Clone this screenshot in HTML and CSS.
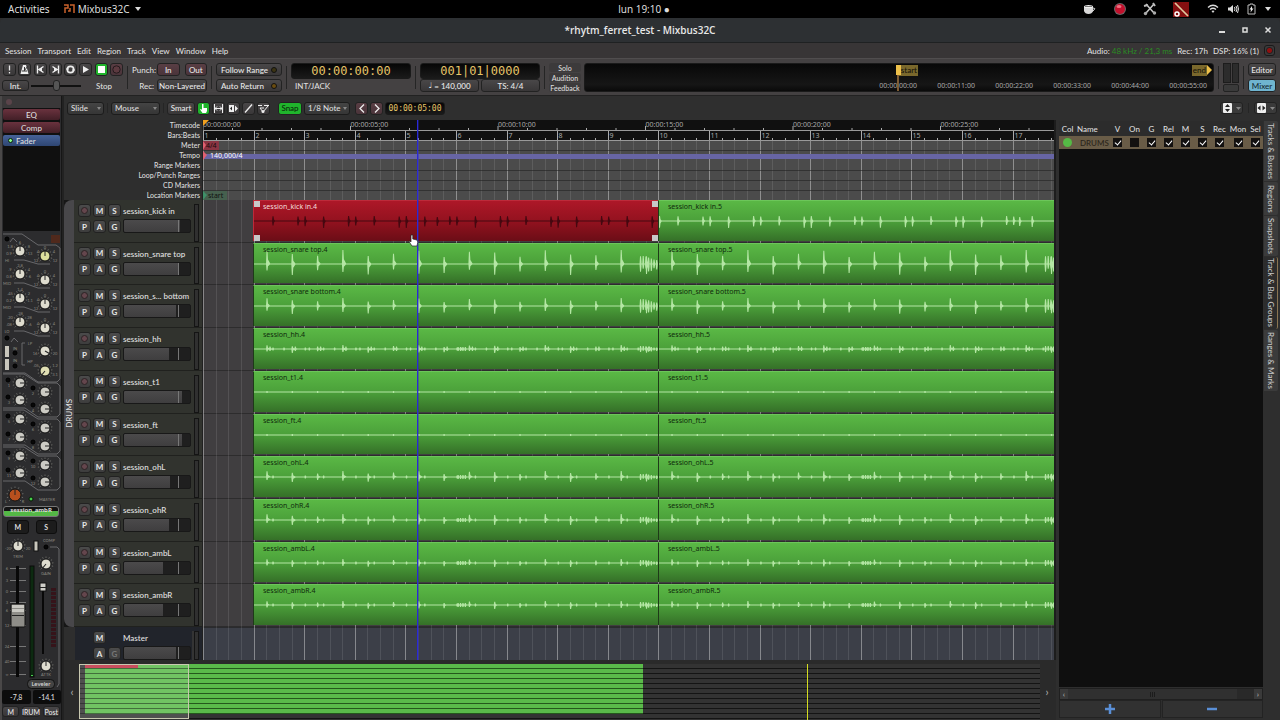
FILE: index.html
```html
<!DOCTYPE html>
<html lang="en">
<head>
<meta charset="utf-8">
<title>*rhytm_ferret_test - Mixbus32C</title>
<link rel="stylesheet" href="styles.css">
</head>
<body>
<header class="desktop-bar">
  <span class="activities">Activities</span>
  <svg class="app-icon" width="12" height="10" viewBox="0 0 12 10"><path d="M1 1h4v3H2v5M7 1h4v8M7 4v3H5" fill="none" stroke="#c9622c" stroke-width="1.5"/></svg>
  <span class="app-name">Mixbus32C</span><span class="caret"></span>
  <time class="desktop-clock">lun 19:10 ●</time>
  <div class="tray">
    <svg width="14" height="12" viewBox="0 0 14 12"><path d="M2 4h9v4q-1 3-4.500 3T2 8z" fill="#d8d8d8"/><ellipse cx="6.500" cy="3.500" rx="4.500" ry="1.600" fill="#f2f2f2"/><path d="M3 3.500h7" stroke="#777"/><path d="M11 5q3 0 1 2t-2 1" fill="none" stroke="#d8d8d8"/></svg>
    <svg width="14" height="14" viewBox="0 0 14 14"><circle cx="7" cy="7" r="6" fill="#6e6668"/><circle cx="7" cy="7" r="5" fill="#c2102c"/><ellipse cx="6" cy="4.500" rx="2.500" ry="1.500" fill="#ee7080"/></svg>
    <svg width="14" height="14" viewBox="0 0 14 14"><path d="M3 2l8 9M11 2L3 11" stroke="#c9c9c9" stroke-width="1.500"/><circle cx="2.500" cy="11.500" r="1.700" fill="#aaa"/><circle cx="11.500" cy="11" r="1.700" fill="#aaa"/><path d="M10 1l2 3M1 4l4-1" stroke="#bbb" stroke-width="2"/></svg>
    <svg width="16" height="15" viewBox="0 0 16 15"><rect width="16" height="15" fill="#850f10"/><path d="M2 1l13 13M3 2l6 6" stroke="#e0c9a0" stroke-width="1.700"/><circle cx="4" cy="12" r="2" fill="none" stroke="#fff" stroke-width="1.500"/></svg>
    <svg width="12" height="10" viewBox="0 0 12 10"><path d="M1 3.500q5-4.500 10 0M3 5.500q3-2.500 6 0" fill="none" stroke="#ddd" stroke-width="1.400"/><path d="M4.500 7q1.500-1 3 0L6 9z" fill="#ddd"/></svg>
    <svg width="12" height="10" viewBox="0 0 12 10"><path d="M1 3.500h2L6 1v8L3 6.500H1z" fill="#ddd"/><path d="M7.500 3q1 2 0 4M9 2q2 3 0 6M10.500 1q2 4 0 8" fill="none" stroke="#ddd"/></svg>
    <svg width="9" height="12" viewBox="0 0 9 12"><path d="M1 2h2V1h3v1h2v9H1z" fill="none" stroke="#bbb"/><path d="M5 3L2.500 6.500H4L3.500 9.500 6.500 5.500H5z" fill="#eee"/></svg>
    <span class="caret"></span>
  </div>
</header>

<div class="titlebar">
  <h1>*rhytm_ferret_test - Mixbus32C</h1>
  <div class="window-buttons">
    <button aria-label="Minimize"><svg width="8" height="8"><path d="M1 6h6" stroke="#ddd" stroke-width="2"/></svg></button>
    <button aria-label="Maximize"><svg width="8" height="8"><rect x="2" y="2" width="4" height="4" fill="none" stroke="#ddd" stroke-width="1.500"/></svg></button>
    <button aria-label="Close"><svg width="8" height="8"><path d="M1.500 1.500l5 5m0-5l-5 5" stroke="#ddd" stroke-width="1.500"/></svg></button>
  </div>
</div>

<nav class="menubar">
  <button>Session</button><button>Transport</button><button>Edit</button><button>Region</button><button>Track</button><button>View</button><button>Window</button><button>Help</button>
  <div class="status"><span>Audio: <b>48 kHz / 21,3 ms</b></span><span>Rec: 17h</span><span>DSP: 16% (1)</span><i class="error-led"></i></div>
</nav>

<section class="transport">
  <div class="stack controls">
    <div class="line">
      <button class="btn icon" aria-label="Panic"><svg width="11" height="11"><path d="M5.500 1.500v5M5.500 8v1.500" stroke="#e8e8e8" stroke-width="1.300"/></svg></button>
      <button class="btn icon" aria-label="Metronome"><svg width="11" height="11"><path d="M4 1h3l2.500 9h-8z" fill="#eee"/><path d="M5.500 3v3M3 7h5M5 7l4-5" stroke="#333"/></svg></button>
      <button class="btn icon" aria-label="Go to start"><svg width="11" height="11"><path d="M2.500 1.500v8M8.500 2.500L4 5.500l4.500 3" stroke="#eee" stroke-width="1.400" fill="none"/><path d="M3 5.500l4-2v4z" fill="#eee"/></svg></button>
      <button class="btn icon" aria-label="Go to end"><svg width="11" height="11"><path d="M8.500 1.500v8M2.500 2.500L7 5.500l-4.500 3" stroke="#eee" stroke-width="1.400" fill="none"/><path d="M8 5.500l-4-2v4z" fill="#eee"/></svg></button>
      <button class="btn icon" aria-label="Loop"><svg width="11" height="11"><circle cx="5.500" cy="5.500" r="3.200" fill="none" stroke="#eee" stroke-width="1.700"/><path d="M1 5h3M7 6h3" stroke="#eee"/></svg></button>
      <button class="btn icon" aria-label="Play"><svg width="11" height="11"><path d="M3 2l6 3.500L3 9z" fill="#eee"/></svg></button>
      <button class="btn icon green" aria-label="Stop"><svg width="11" height="11"><rect x="2" y="2" width="7" height="7" fill="#fff"/></svg></button>
      <button class="btn icon red" aria-label="Record"><svg width="11" height="11"><circle cx="5.500" cy="5.500" r="3.700" fill="#5c3a40" stroke="#241a1c"/></svg></button>
    </div>
    <div class="line"><button class="btn int">Int.</button><input class="shuttle" type="range" aria-label="Shuttle speed" value="50"><span class="stop-label">Stop</span></div>
  </div>
  <i class="sep"></i>
  <div class="stack punch">
    <div class="line"><span class="caption">Punch:</span><button class="btn red grow">In</button><button class="btn red grow gap">Out</button></div>
    <div class="line"><span class="caption">Rec:</span><button class="btn grow">Non-Layered</button></div>
  </div>
  <i class="sep"></i>
  <div class="stack follow">
    <button class="btn led">Follow Range<i></i></button>
    <button class="btn led">Auto Return<i class="amber"></i></button>
  </div>
  <i class="sep"></i>
  <div class="stack clock-col"><output class="clock">00:00:00:00</output><div class="line sync">INT/JACK</div></div>
  <i class="sep"></i>
  <div class="stack clock-col"><output class="clock">001|01|0000</output><div class="line"><button class="btn grow"><span class="note-glyph">♩</span>= 140,000</button><button class="btn grow">TS: 4/4</button></div></div>
  <i class="sep"></i>
  <div class="alerts"><button>Solo</button><button>Audition</button><button>Feedback</button></div>
  <div class="mini-timeline">
    <span class="mini-start">start</span><span class="mini-end">end</span>
    <div class="mini-labels"><span>00:00:00:00</span><span>00:00:11:00</span><span>00:00:22:00</span><span>00:00:33:00</span><span>00:00:44:00</span><span>00:00:55:00</span></div>
  </div>
  <i class="sep"></i>
  <div class="master-meter"><i></i><i></i><b></b></div>
  <i class="sep"></i>
  <div class="stack pages"><button class="btn">Editor</button><button class="btn active">Mixer</button></div>
</section>

<main class="workspace">
  <aside class="strip">
    <div class="strip-top"><i></i></div>
    <div class="processors"><button class="plugin">EQ</button><button class="plugin">Comp</button><button class="plugin fader-plugin"><i></i>Fader</button></div>
    <svg id="eq-panel" class="panel" width="62" height="273" viewBox="0 233 62 273"></svg>
    <button class="strip-name">session_ambR</button>
    <div class="strip-ms"><button>M</button><button>S</button></div>
    <svg id="fader-panel" class="panel" width="62" height="154" viewBox="0 536 62 154"></svg>
    <div class="levels"><output>-7,8</output><output>-14,1</output></div>
    <div class="strip-foot"><button class="btn">M</button><button class="btn">IRUM</button><button class="btn">Post</button></div>
  </aside>

  <div class="editor-page">
    <div class="toolbar">
      <label class="drop slide"><select aria-label="Edit mode"><option>Slide</option></select></label>
      <i class="sep"></i>
      <label class="drop mouse"><select aria-label="Edit point"><option>Mouse</option></select></label>
      <i class="sep"></i>
      <button class="btn smart">Smart</button>
      <div class="tools">
        <button class="btn icon green" aria-label="Grab"><svg width="11" height="11"><path d="M4 1h1.500v4H9v3L8 10H4.500L2 6.500l1-.5 1 1z" fill="#fff"/></svg></button>
        <button class="btn icon" aria-label="Range"><svg width="11" height="11"><path d="M1.500 1v9M9.500 1v9M2 5.500h7M4 3.500l-2 2 2 2M7 3.500l2 2-2 2" stroke="#eee" fill="none"/></svg></button>
        <button class="btn icon" aria-label="Stretch"><svg width="11" height="11"><path d="M1 2h5v7H1zM7 2.500L10 5.500 7 8.500z" fill="#eee"/><path d="M4 3.500v4L2 5.500z" fill="#222"/></svg></button>
        <button class="btn icon" aria-label="Draw"><svg width="11" height="11"><path d="M2 9.500L9 1.500" stroke="#eee" stroke-width="1.400"/></svg></button>
        <button class="btn icon" aria-label="Internal edit"><svg width="11" height="11"><path d="M0 2.500h4M6 2.500h5M2 5l3 4 5-6M2 5h4" stroke="#eee" fill="none"/><circle cx="5" cy="8.500" r="1.500" fill="#eee"/></svg></button>
      </div>
      <button class="btn green snap">Snap</button>
      <label class="drop note"><select aria-label="Grid"><option>1/8 Note</option></select></label>
      <button class="btn red icon nudge" aria-label="Nudge earlier"><svg width="10" height="11"><path d="M7 1.500l-4 4 4 4" fill="none" stroke="#eee" stroke-width="1.300"/></svg></button>
      <button class="btn red icon nudge" aria-label="Nudge later"><svg width="10" height="11"><path d="M3 1.500l4 4-4 4" fill="none" stroke="#eee" stroke-width="1.300"/></svg></button>
      <output class="clock small">00:00:05:00</output>
      <div class="zoomers">
        <button class="btn zoomer" aria-label="Track height"><svg width="20" height="10"><rect x="1" width="9" height="10" rx="1" fill="#eee"/><path d="M3 4l2.500-3L8 4zM3 6l2.500 3L8 6z" fill="#222"/><path d="M14 4h5l-2.500 3z" fill="#888"/></svg></button>
        <i class="sep"></i>
        <button class="btn zoomer" aria-label="Visible tracks"><svg width="20" height="10"><rect x="1" width="9" height="10" rx="1" fill="#eee"/><path d="M4.500 2.500l-3 2.500 3 2.500zM6.500 2.500l3 2.500-3 2.500z" fill="#222"/><path d="M14 4h5l-2.500 3z" fill="#888"/></svg></button>
      </div>
    </div>

    <div class="columns">
      <div class="editor">
        <div class="arrange">
          <div class="sidebar">
            <div class="ruler-names"><span>Timecode</span><span>Bars:Beats</span><span>Meter</span><span>Tempo</span><span>Range Markers</span><span>Loop/Punch Ranges</span><span>CD Markers</span><span>Location Markers</span></div>
            <div class="track-heads">
              <div class="group-tab"><span>DRUMS</span></div>
              <div id="heads" class="heads"></div>
            </div>
            <div class="master-head">
              <div class="head-buttons"><i></i><button class="btn">M</button><i></i><i></i><button class="btn">A</button><button class="btn dim">G</button></div>
              <div class="head-main"><span class="track-name">Master</span><input class="level" type="range" aria-label="Master level" style="--fill:52px"></div>
              <i class="meter"></i>
            </div>
          </div>
          <div class="canvas">
            <svg id="grid" class="grid"></svg>
            <svg id="rulers" class="rulers"></svg>
            <div id="lanes" class="lanes"></div>
            <div class="master-lane"></div>
            <i class="playhead"></i>
            <svg class="pointer" width="11" height="13" viewBox="0 0 11 13"><path d="M3 1h1.800v4L9 6l.8 2L9 12H4L1 7.500 2 7l1 1z" fill="#fff" stroke="#222" stroke-width=".7"/></svg>
          </div>
        </div>
        <div class="summary">
          <button aria-label="Scroll left">‹</button>
          <svg id="overview" class="overview"></svg>
          <button aria-label="Scroll right">›</button>
        </div>
      </div>

      <section class="groups">
        <div class="group-list">
          <table>
            <colgroup><col class="c-col"><col><col class="c-flag"><col class="c-flag"><col class="c-flag"><col class="c-flag"><col class="c-flag"><col class="c-flag"><col class="c-flag"><col class="c-mon"><col class="c-sel"></colgroup>
            <thead><tr><th>Col</th><th class="name">Name</th><th>V</th><th>On</th><th>G</th><th>Rel</th><th>M</th><th>S</th><th>Rec</th><th>Mon</th><th>Sel</th></tr></thead>
            <tbody><tr><td><i class="swatch"></i></td><td class="name">DRUMS</td>
              <td><input type="checkbox" aria-label="Visible" checked></td><td><input type="checkbox" aria-label="On"></td><td><input type="checkbox" aria-label="Gain" checked></td><td><input type="checkbox" aria-label="Relative" checked></td><td><input type="checkbox" aria-label="Mute" checked></td><td><input type="checkbox" aria-label="Solo" checked></td><td><input type="checkbox" aria-label="Record" checked></td><td><input type="checkbox" aria-label="Monitoring" checked></td><td><input type="checkbox" aria-label="Select" checked></td></tr></tbody>
          </table>
        </div>
        <div class="hscroll"><button aria-label="Scroll list left">‹</button><div class="thumb"><i></i><i></i><i></i></div><button aria-label="Scroll list right">›</button></div>
        <div class="group-actions">
          <button aria-label="Add group"><svg width="12" height="12"><path d="M6 1v10M1 6h10" stroke="#5a8fd6" stroke-width="2.500"/></svg></button>
          <button aria-label="Remove group"><svg width="12" height="12"><path d="M1 6h10" stroke="#5a8fd6" stroke-width="2.500"/></svg></button>
        </div>
      </section>

      <nav class="side-tabs"><button class="t1">Tracks &amp; Busses</button><button class="t2">Regions</button><button class="t3">Snapshots</button><button class="t4 current">Track &amp; Bus Groups</button><button class="t5">Ranges &amp; Marks</button></nav>
    </div>
  </div>
</main>
<script src="app.js"></script>
</body>
</html>
```
FILE: styles.css
```css
* { box-sizing: border-box; }
body { margin: 0; height: 100vh; display: flex; flex-direction: column; overflow: hidden; background: #2e2e2e; color: #dedede; font: 500 8px/10px Lato, "Open Sans", sans-serif; }
button, select, input { font: inherit; color: inherit; margin: 0; padding: 0; border: 0; background: none; }
button { display: flex; align-items: center; justify-content: center; white-space: nowrap; }
svg { display: block; flex: none; }
i { font-style: normal; }

.desktop-bar { position: relative; flex: none; height: 18px; background: #000; display: flex; align-items: center; padding: 0 8px; font: 10px/16px "Noto Sans", sans-serif; color: #ddd; }
.app-icon { margin: 0 3px 0 13px; }
.caret { width: 0; height: 0; border: 3px solid transparent; border-top: 4px solid #ddd; border-bottom: 0; margin-left: 5px; }
.desktop-clock { position: absolute; left: 0; right: 0; padding-left: 8px; text-align: center; }
.tray { margin-left: auto; display: flex; align-items: center; gap: 8px; }
.tray svg:nth-child(1) { margin-right: 9px; }
.tray svg:nth-child(2), .tray svg:nth-child(3) { margin-right: 8px; }
.tray svg:nth-child(4) { margin-right: 10px; }
.tray .caret { margin-left: 1px; margin-right: 1px; }

.titlebar { position: relative; flex: none; height: 24px; border-radius: 5px 5px 0 0; background: #2d3033; display: flex; align-items: center; justify-content: center; }
.titlebar h1 { margin: 0; font: 600 10px/12px "Open Sans", sans-serif; color: #e8e8e8; }
.window-buttons { position: absolute; right: 8px; display: flex; gap: 15px; }

.menubar { flex: none; height: 16px; display: flex; align-items: center; gap: 6px; padding: 0 5px; background: #383536; border-top: 1px solid #1f2122; }
.status { margin-left: auto; display: flex; align-items: center; gap: 5px; }
.status b { font-weight: 400; color: #2a8c24; }
.error-led { width: 11px; height: 11px; border: 1px solid #1a1a1a; border-radius: 3px; background: radial-gradient(circle, #901010 0 2px, #222 3px, #3c3a3b 4px); }

.transport { flex: none; height: 38px; display: flex; align-items: stretch; padding: 4px 4px 3px 2px; background: #444142; border-top: 1px solid #504d4e; border-bottom: 1px solid #222; }
.sep { flex: none; width: 1px; margin: 3px 4px; background: #252525; }
.stack { flex: none; display: flex; flex-direction: column; justify-content: space-between; }
.line { display: flex; align-items: center; height: 13px; }
.btn { height: 13px; border: 1px solid #222; border-radius: 3px; background: linear-gradient(#494748, #393738); color: #e8e8e8; }
.btn.icon { width: 13px; }
.btn.red { background: linear-gradient(#593e44, #4a343a); }
.btn.green { background: #20b42c; color: #0a2a0a; }
.grow { flex: 1; }
.controls { width: 121px; }
.controls .line:first-child { justify-content: space-between; padding-left: 1px; }
.btn.int { width: 27px; height: 11px; }
.shuttle { appearance: none; width: 50px; height: 11px; margin: 0 15px 0 2px; background: linear-gradient(#111, #111) center / 100% 2px no-repeat; }
.shuttle::-webkit-slider-thumb { appearance: none; width: 7px; height: 11px; border-radius: 3px; border: 1px solid #222; background: #555; }
.punch { width: 75px; }
.caption { width: 25px; padding-right: 3px; text-align: right; }
.btn.gap { margin-left: 5px; }
.follow { width: 66px; }
.btn.led { justify-content: space-between; padding: 0 4px; }
.btn.led i { width: 6px; height: 6px; border-radius: 50%; border: 1px solid #111; background: #3c3413; }
.btn.led .amber { background: #6a4c10; }
.clock-col { width: 120px; }
.clock { height: 16px; border: 1px solid #1a1a1a; border-radius: 3px; background: linear-gradient(#060606, #1a1a1a); color: #e6c468; font: 12px/14px "DejaVu Sans Mono", monospace; text-align: center; white-space: nowrap; }
.clock-col .line { gap: 2px; }
.note-glyph { font-family: "DejaVu Sans", sans-serif; margin-right: 2px; }
.sync { padding-left: 4px; }
.alerts { flex: none; width: 32px; margin-right: 3px; display: flex; flex-direction: column; justify-content: space-between; font-size: 7px; }
.alerts button { height: 9px; border-radius: 3px; background: #3c3a3b; }
.mini-timeline { position: relative; flex: 1; min-width: 0; border: 1px solid #1a1a1a; border-radius: 3px; background: linear-gradient(#080808, #161616 75%, #0a0a0a); overflow: hidden; display: flex; align-items: flex-end; justify-content: flex-end; }
.mini-labels { display: flex; padding-right: 6px; color: #a8a8a8; font: 7px/10px "Noto Sans", sans-serif; }
.mini-labels span { width: 58px; text-align: right; }
.mini-start, .mini-end { position: absolute; top: 1px; height: 11px; background: #7a682c; color: #17140a; font-size: 8px; }
.mini-start { right: 295px; padding: 0 1px 0 3px; }
.mini-start::before { content: ""; position: absolute; left: -2px; top: 0; width: 5px; height: 28px; background: linear-gradient(#edc04a, #edc04a) top / 5px 10px no-repeat, linear-gradient(#7e5c34, #7e5c34) center / 2px 28px no-repeat; }
.mini-end { right: 6px; padding: 0 1px; }
.mini-end::after { content: ""; position: absolute; left: 100%; top: 0; border: 5px solid transparent; border-left-color: #edc04a; border-right: 0; }
.master-meter { flex: none; width: 16px; display: grid; grid-template: 1fr 8px / 1fr 1fr; gap: 1px; }
.master-meter i { background: #2c2c2c; border: 1px solid #1c1c1c; }
.master-meter b { grid-column: 1 / 3; background: #3a3a3a; border: 1px solid #222; border-radius: 2px; }
.pages { width: 28px; }
.btn.active { background: #6fb4d0; color: #152a33; }

.workspace { flex: 1; min-height: 0; display: flex; }
.strip { flex: none; width: 62px; display: flex; flex-direction: column; background: #2c2c2e; border-left: 2px solid #4a4848; border-right: 1px solid #161616; }
.strip svg, .strip-foot { margin-left: -2px; }
.strip-top { height: 12px; padding: 3px 4px; background: #3a3839; }
.strip-top i { display: block; width: 6px; height: 6px; border-radius: 50%; background: #5a444a; }
.processors { flex: 1; margin: 0 1px 2px 1px; padding-top: 1px; background: #101010; display: flex; flex-direction: column; gap: 2px; }
.plugin { height: 11px; border-radius: 2px; background: linear-gradient(#6a323e, #421f27); }
.plugin.fader-plugin { justify-content: flex-start; gap: 3px; padding-left: 5px; background: linear-gradient(#466298, #2e4673); }
.fader-plugin i { width: 5px; height: 5px; border: 1px solid #0c200c; border-radius: 50%; background: #8f8; }
.panel text { fill: #85837c; font-size: 4px; text-anchor: middle; }
.strip-name { height: 11px; margin: 0 2px 0 1px; border: 1px solid #777; border-radius: 3px; background: linear-gradient(#141414 50%, #54b846 50%); font: bold 6px/7px "Noto Sans", sans-serif; align-items: flex-start; }
.strip-ms { display: flex; gap: 7px; padding: 3px 4px 2px 5px; }
.strip-ms button { flex: 1; height: 14px; border-radius: 3px; border: 1px solid #0e0e0e; background: #1c1c1c; font-weight: 700; font-size: 7px; }
.levels { display: flex; gap: 2px; font-size: 7px; }
.levels output { flex: 1; height: 14px; line-height: 14px; text-align: center; background: #0c0c0c; border-radius: 2px; }
.strip-foot { display: flex; gap: 3px; padding: 2px 1px 3px 2px; }
.strip-foot .btn { flex: 1; min-width: 0; height: 11px; font-size: 7px; }

.editor-page { flex: 1; min-width: 0; display: flex; flex-direction: column; border-left: 2px solid #222; }
.toolbar { flex: none; height: 24px; display: flex; align-items: center; padding: 0 3px; gap: 2px; background: #2f2f2f; }
.toolbar .sep { height: 10px; margin: 0 1px; }
.drop { position: relative; height: 13px; display: flex; border: 1px solid #1c1c1c; border-radius: 3px; background: linear-gradient(#444, #363636); }
.drop select { appearance: none; width: 100%; padding-left: 3px; outline: 0; }
.drop::after { content: ""; position: absolute; right: 2px; top: 4px; border: 2px solid transparent; border-top: 3px solid #888; border-bottom: 0; pointer-events: none; }
.slide { width: 37px; }
.mouse { width: 49px; }
.smart { width: 28px; }
.tools { display: flex; gap: 2px; margin-right: 6px; }
.snap { width: 24px; }
.note { width: 46px; margin-right: 3px; }
.clock.small { height: 13px; width: 60px; font: 8px/11px "DejaVu Sans Mono", monospace; }
.zoomers { margin-left: auto; display: flex; align-items: center; gap: 4px; }
.btn.zoomer { width: 23px; height: 12px; background: #3a3a3a; }

.columns { flex: 1; min-height: 0; display: flex; }
.editor { flex: 1; min-width: 0; display: flex; flex-direction: column; }
.arrange { flex: 1; min-height: 0; display: flex; border-right: 2px solid #1d1d1d; }
.sidebar { flex: none; width: 138px; display: flex; flex-direction: column; }
.ruler-names { flex: none; display: flex; flex-direction: column; text-align: right; padding-right: 2px; font-size: 7px; }
.track-heads { flex: 1; min-height: 0; display: flex; background: #161616; }
.group-tab { width: 11px; border-radius: 8px 0 0 8px; background: #48474a; display: flex; align-items: center; justify-content: center; }
.group-tab span { writing-mode: vertical-rl; transform: rotate(180deg); }
.heads { flex: 1; display: flex; flex-direction: column; }
.head, .master-head { display: flex; padding: 4px 3px 0 4px; background: #31332e; }
.head { flex: 1; min-height: 0; border-bottom: 1px solid #20211e; }
.master-head { flex: none; height: 33px; margin-left: 11px; padding-left: 3px; overflow: hidden; background: #21242b; }
.head-buttons { flex: none; align-self: flex-start; display: grid; grid-template-columns: repeat(3, 13px); grid-auto-rows: 13px; gap: 3px 2px; }
.head-buttons .btn { height: 13px; font-weight: 700; background: linear-gradient(#4b4b4b, #3d3d3d); }
.head-buttons .dim { color: #777; }
.rec-dot { width: 7px; height: 7px; border-radius: 50%; background: #64464d; border: 1px solid #2c2224; }
.head-main { flex: 1; min-width: 0; padding: 2px 3px 0 2px; display: flex; flex-direction: column; gap: 3px; }
.track-name { white-space: nowrap; color: #e2e2e2; }
.level { appearance: none; width: 68px; height: 14px; flex: none; border: 1px solid #181818; border-radius: 2px; background: linear-gradient(#777, #777) 54px 0 / 1px 100% no-repeat, linear-gradient(#4b4a4b, #3f3e3f) 0 0 / var(--fill) 100% no-repeat, #1f1f1f; }
.level::-webkit-slider-thumb { appearance: none; width: 1px; height: 12px; background: transparent; }
.meter { flex: none; width: 5px; border: 1px solid #141414; background: #303030; }
.master-head .meter { box-shadow: -2px 0 #343434; }

.canvas { position: relative; flex: 1; min-width: 0; display: flex; flex-direction: column; overflow: hidden; background: #403e40; border-left: 1px solid #202020; }
.grid { position: absolute; left: 0; top: 20px; width: 100%; height: calc(100% - 20px); }
.rulers { position: relative; z-index: 1; width: 100%; height: 80px; }
.rulers text { font: 7px "Noto Sans", sans-serif; fill: #a9a9a9; }
.lanes { flex: 1; min-height: 0; display: flex; flex-direction: column; }
.lane { flex: 1; min-height: 0; display: flex; padding: 0 0 2px 50px; box-shadow: inset 0 -1px #2d2c2d; }
.region { position: relative; z-index: 1; min-width: 0; overflow: hidden; background: linear-gradient(#5ab845, #4ba03a 50%, #357028); border-top: 1px solid #6cc65a; border-left: 1px solid #1e3a18; color: #0f2a0c; }
.region:first-child { flex: none; width: 405px; }
.region:last-child { flex: 1; }
.region span { position: relative; display: block; padding: 1px 0 0 9px; font: 7px/10px "Noto Sans", sans-serif; }
.region svg { position: absolute; left: 0; top: -1px; width: 100%; height: 40px; }
.region path { fill: #b4e6a4; }
.region.selected { background: linear-gradient(#ad1728, #93121f 50%, #6b0d16); border-color: #bd2a3a; color: #f4dcdc; }
.region.selected path { fill: #450810; }
.handle { position: absolute; width: 6px; height: 6px; background: #c8c8c8; }
.handle.tl { left: 0; top: 0; }
.handle.tr { right: 0; top: 0; }
.handle.bl { left: 0; bottom: 0; }
.handle.br { right: 0; bottom: 0; }
.master-lane { flex: none; height: 33px; background: #3c3f48; border-top: 1px solid #2a2b2e; }
.playhead { position: absolute; z-index: 2; left: 214px; top: 0; bottom: 0; width: 1px; background: #2a28d8; box-shadow: 1px 0 rgba(42, 40, 190, .4); }
.pointer { position: absolute; z-index: 3; left: 205px; top: 114px; }

.summary { flex: none; height: 60px; display: flex; padding: 4px 2px 0 1px; background: #2a2a2a; }
.summary button { width: 14px; color: #aaa; font-size: 11px; }
.overview { flex: 1; min-width: 0; height: 56px; background: #333; }

.groups { flex: none; width: 208px; padding: 1px 1px 2px 3px; display: flex; flex-direction: column; }
.group-list { flex: 1; background: #0f0f0f; }
table { width: 100%; border-collapse: collapse; table-layout: fixed; }
th, td { padding: 0; font-weight: 500; text-align: center; }
thead tr { height: 15px; background: #2c2c2c; }
tbody tr { height: 13px; background: #695c47; color: #2a241a; }
.name { text-align: left; }
th.name { padding-left: 1px; }
td.name { padding-left: 4px; }
.c-col { width: 17px; }
.c-flag { width: 17px; }
.c-mon { width: 20px; }
.c-sel { width: 15px; }
.swatch { display: block; margin: auto; width: 9px; height: 9px; border-radius: 50%; background: #55b945; }
td input { appearance: none; display: block; margin: auto; width: 9px; height: 9px; background: #131110; position: relative; }
td input:checked::after { content: ""; position: absolute; left: 3px; top: 1px; width: 3px; height: 5px; border: solid #fff; border-width: 0 1px 1px 0; transform: rotate(40deg); }
.hscroll { height: 12px; margin-top: 1px; display: flex; background: #292929; border: 1px solid #202020; }
.hscroll button { width: 8px; color: #bbb; background: #3a3a3a; }
.thumb { flex: 1; margin-right: 17px; background: #303030; display: flex; align-items: center; justify-content: center; gap: 1px; }
.thumb i { width: 1px; height: 5px; background: #1c1c1c; }
.group-actions { display: flex; height: 18px; gap: 1px; }
.group-actions button { flex: 1; border: 1px solid #232323; background: #313131; }
.side-tabs { flex: none; width: 16px; padding: 1px 1px 0 0; display: flex; flex-direction: column; gap: 1px; }
.side-tabs button { writing-mode: vertical-rl; width: 14px; background: #3b3b3b; border-radius: 0 2px 2px 0; color: #c8c8c8; }
.t1 { height: 60px; }
.t2 { height: 33px; }
.t3 { height: 40px; }
.t4 { height: 72px; }
.t5 { height: 61px; }
.side-tabs .current { background: #2c2c2c; border-right: 1px solid #8a7450; }
```
FILE: app.js
```js
const BAR = 50.6;
const BEAT = BAR / 4;
const byId = (id) => document.getElementById(id);
const at = (n) => n.toFixed(1);

/* ---- time grid and rulers ---- */
function drawRulers() {
  const width = byId('grid').getBoundingClientRect().width;
  let grid = '<rect width="100%" height="60" fill="#4b4b4b"/>';
  for (let i = 0; i * BEAT < width; i++) {
    const x = Math.round(i * BEAT) + 0.5;
    grid += `<path d="M${x} 0V2000" stroke="#fff" stroke-opacity="${i % 4 ? 0.1 : 0.38}"/>`;
  }
  byId('grid').innerHTML = grid;

  let rulers = '<rect width="100%" height="20" fill="#101010"/><path d="M0 10.500H4000M0 20.500H4000" stroke="#999"/>';
  rulers += '<path d="M0 30.500H4000M0 50.500H4000M0 60.500H4000M0 70.500H4000" stroke="#222" stroke-opacity=".6"/>';
  for (let s = 0; s * 147.5 < width; s++) {
    const x = s * 147.5;
    for (let k = 0; k < 5; k++) rulers += `<path d="M${at(x + k * 29.5)} ${k ? 8 : 6}V10" stroke="#aaa"/>`;
    if (x + 45 < width) rulers += `<text x="${at(x)}" y="7">00:00:${String(s * 5).padStart(2, '0')}:00</text>`;
  }
  for (let i = 0; i * BEAT < width; i++) {
    const x = Math.round(i * BEAT) + 0.5;
    rulers += `<path d="M${x} ${i % 4 ? 18 : 11}V20" stroke="#aaa"/>`;
    if (i % 4 === 0 && x + 12 < width) rulers += `<text x="${x + 1}" y="18">${i / 4 + 1}</text>`;
  }
  rulers += '<path d="M0 0H6L0 6Z" fill="#f0a020"/>';
  rulers += '<rect y="21" width="16" height="9" fill="#8a3442"/><path d="M0 21l3 4-3 5z" fill="#e06070"/><text x="3" y="28" style="fill:#160a0c">4/4</text>';
  rulers += '<rect y="34" width="100%" height="5" fill="#6765a4"/><path d="M0 31l4 4-4 5z" fill="#e06070"/><text x="7" y="38" style="fill:#fff">140,000/4</text>';
  rulers += '<rect y="71" width="24" height="9" fill="#46604e"/><path d="M0 71l4 4-4 5z" fill="#3f9068"/><text x="5" y="78" style="fill:#111">start</text>';
  byId('rulers').innerHTML = rulers;
}
drawRulers();
window.addEventListener('resize', drawRulers);

/* ---- waveforms ---- */
function spike(x, up, down, tail) {
  return `M${at(x - 0.5)} 21L${at(x)} ${at(21 - up)}H${at(x + 1)}L${at(x + 1.5)} ${at(21 - up / 3)}L${at(x + tail)} 21L${at(x + 1.5)} ${at(21 + down / 3)}L${at(x + 1)} ${at(21 + down)}H${at(x)}Z`;
}
function vary(n) { return 0.75 + 0.25 * Math.sin(n * 2.3 + 1); }
function waveform(kind, width, first) {
  let d = `M0 20.500H4000V21.500H0Z`;
  const bars = Math.ceil(width / BAR);
  if (kind === 'kick') {
    for (let b = 0; b < bars; b++) {
      [0, 18.5, 43.5].forEach((o, i) => {
        if (first && b + i === 0) return;
        d += spike(b * BAR + o, 4 + vary(b + i), 6 * vary(b + i * 2) + 1, 3);
      });
      if (first && b === 3) d += spike(b * BAR + 31, 4, 5, 3);
      if (!first && b === 7) d += spike(b * BAR + 6, 4, 5, 3);
    }
    return d;
  }
  const size = { top: [14, 11, 4], bottom: [8, 8, 4], hh: [4, 4, 7], oh: [6, 5, 5], amb: [4, 4, 4] }[kind];
  if (!size) {
    for (let n = 0; n < bars * 2; n++) d += spike(12.5 + n * 25.3, 1, 1, 1);
    return d;
  }
  for (let n = 0; n < bars * 2; n++) {
    const x = 12.5 + n * 25.3;
    d += spike(x, size[0] * vary(n), size[1] * vary(n + 2), size[2]);
    if (kind !== 'top' && kind !== 'bottom') {
      d += spike(x + (n % 2 ? 13 : 6), 1.5, 1.5, 3);
      if (n % 8 === 7) for (let k = 0; k < 4; k++) d += spike(x + 14 + k * 2.4, 2, 2, 3);
      if (kind === 'hh') d += spike(x + 3, 2.5, 2, 6) + spike(x + 17, 1.5, 1.5, 4);
    }
  }
  const roll = kind === 'top' ? 8 : kind === 'bottom' ? 7 : 3;
  for (let k = 0; k < 7; k++) d += spike(386 + k * 2.7, roll * vary(k * 3), roll * vary(k * 2), 1.5);
  return d;
}

/* ---- tracks ---- */
const tracks = [
  ['session_kick in', 'session_kick in', 56, 'kick'],
  ['session_snare top', 'session_snare top', 54, 'top'],
  ['session_s... bottom', 'session_snare bottom', 52, 'bottom'],
  ['session_hh', 'session_hh', 45, 'hh'],
  ['session_t1', 'session_t1', 58, 'flat'],
  ['session_ft', 'session_ft', 58, 'flat'],
  ['session_ohL', 'session_ohL', 46, 'oh'],
  ['session_ohR', 'session_ohR', 45, 'oh'],
  ['session_ambL', 'session_ambL', 39, 'amb'],
  ['session_ambR', 'session_ambR', 39, 'amb'],
];
byId('heads').innerHTML = tracks.map(([name, , fill]) => `
  <div class="head">
    <div class="head-buttons"><button class="btn" aria-label="Record enable"><i class="rec-dot"></i></button><button class="btn">M</button><button class="btn">S</button><button class="btn">P</button><button class="btn">A</button><button class="btn">G</button></div>
    <div class="head-main"><span class="track-name">${name}</span><input class="level" type="range" aria-label="${name} level" style="--fill:${fill}px"></div>
    <i class="meter"></i>
  </div>`).join('');
byId('lanes').innerHTML = tracks.map(([, name, , kind], row) => {
  const selected = row === 0;
  const handles = selected ? '<i class="handle tl"></i><i class="handle tr"></i><i class="handle bl"></i><i class="handle br"></i>' : '';
  return `<div class="lane">
    <div class="region${selected ? ' selected' : ''}"><svg><path d="${waveform(kind, 400, true)}"/></svg><span>${name}.4</span>${handles}</div>
    <div class="region"><svg><path d="${waveform(kind, 400, false)}"/></svg><span>${name}.5</span></div>
  </div>`;
}).join('');

/* ---- session overview ---- */
let overview = '';
for (let r = 0; r < 11; r++) {
  const y = r * 5;
  overview += `<path d="M0 ${y + 4.5}H4000" stroke="#141414"/>`;
  if (r < 10) overview += `<rect x="6" y="${y}" width="558" height="4" fill="#5aba4a"/><path d="M6 ${y + 4.5}H564" stroke="#24581c"/>`;
}
overview += '<rect x="6" y="1" width="53" height="3" fill="#c03344"/>';
overview += '<rect x=".5" y=".5" width="109" height="54" fill="#fff" fill-opacity=".14" stroke="#c8c8b0"/><path d="M728.500 0V56" stroke="#d4dc20"/>';
byId('overview').innerHTML = overview;

/* ---- channel strip ---- */
function knob(x, y, r = 5, fill = '#dedccf', angle = 0) {
  let ticks = '';
  for (let a = -135; a <= 135; a += 27) ticks += `<path d="M${x} ${y - r - 1}v-1.500" stroke="#8a8a82" stroke-width=".6" transform="rotate(${a} ${x} ${y})"/>`;
  return `${ticks}<circle cx="${x}" cy="${y}" r="${r}" fill="${fill}" stroke="#141414"/><path d="M${x} ${y}V${y - r}" stroke="#222" transform="rotate(${angle} ${x} ${y})"/>`;
}
const led = (x, y) => `<circle cx="${x}" cy="${y}" r="2" fill="#080808" stroke="#000"/>`;
const label = (x, y, s) => `<text x="${x}" y="${y}">${s}</text>`;
const outline = (d) => `<path d="${d}" fill="none" stroke="#68686b"/>`;

let eq = outline('M3 234H22L38 245H56L60 248V379L57 382H38L25 373H3');
eq += '<rect x="51" y="235" width="9" height="8" fill="#50291c"/>';
[[251, 256], [274, 280], [298, 304], [322, 328]].forEach(([l, r], i) => {
  eq += outline(`M14 ${l + 9}H24L38 ${r + 8}H50`);
  eq += knob(20, l) + knob(45, r, 5, i ? '#dedccf' : '#dcdf9c');
  eq += label(38, r - 3, '4') + label(54, r - 3, '4') + label(36, r + 6, '12') + label(55, r + 6, '12') + label(45, r - 7, '0');
  eq += label(10, l - 3, ['1.8', '.9', '.45', '.20'][i]) + label(29, l - 3, ['8', '4', '2', '.28'][i]) + label(20, l - 7, ['6', '2.8', '1.4', '.28'][i]);
  eq += label(9, l + 4, ['0.9', '0.8', '0.2', '.08'][i]) + label(30, l + 4, ['13', '6', '1.1', '.6'][i]) + label(7, l + 11, ['HI', 'MID', 'MID', 'LO'][i]);
});
eq += led(7, 239) + led(7, 338) + led(15, 353) + led(15, 366);
eq += outline('M10 242l3-4 4 4M11 342l3-4 4 4M25 343H22V365H25');
eq += '<rect x="5" y="346" width="4" height="11" fill="#c9c6bc"/><rect x="5" y="359" width="4" height="11" fill="#c9c6bc"/>';
eq += label(30, 345, 'LP') + label(30, 363, 'HP') + label(15, 350, 'IN') + label(15, 362, 'IN');
eq += knob(45, 351, 5, '#dedccf', 120) + knob(45, 371, 5, '#e0dfb4', 220);
eq += label(35, 355, '16') + label(55, 355, '20') + label(36, 367, '.05') + label(55, 367, '1.2') + label(55, 376, '3.1');
[[383, 400], [419, 437], [456, 473]].forEach(([a, b], g) => {
  eq += outline(`M3 ${a - 9}H24L38 ${a}H57L60 ${a + 3}V${b + 14}L57 ${b + 17}H38L25 ${b + 8}H3`);
  [a, b].forEach((y, k) => {
    const n = g * 4 + k * 2 + 1;
    eq += led(8, y - 3) + led(33, y + 5) + knob(20, y, 5, '#cccbc4', 90) + knob(45, y + 9, 5, '#cccbc4', 90);
    eq += label(9, y + 4, n) + label(33, y + 12, n + 1);
  });
});
eq += knob(15, 495, 6, '#b8501e') + '<circle cx="31" cy="499" r="2" fill="#45d04a" stroke="#061606"/>' + label(47, 501, 'MASTER') + label(6, 503, 'L') + label(23, 503, 'R');
byId('eq-panel').innerHTML = eq;

let fp = outline('M50 547H57L59 549V684L57 687');
fp += knob(18, 546, 5) + knob(46, 564, 5, '#dedccf', 220) + knob(46, 666, 5);
fp += label(18, 558, 'TRIM') + label(49, 542, 'COMP') + label(46, 575, 'GAIN') + label(46, 676, 'ATTK') + label(8, 550, '-20') + label(28, 550, '20');
fp += '<rect x="34" y="541" width="4" height="10" fill="#c9c6bc" stroke="#111"/>' + led(46, 547);
[[568, '6'], [580, '3'], [591, '0'], [602, '3'], [610, '6'], [625, '12'], [646, '24'], [661, '40'], [674, '∞']].forEach(([y, s]) => {
  fp += `<path d="M10 ${y + 0.5}H26" stroke="#777"/>` + label(7, y + 2, s);
});
fp += '<rect x="16" y="566" width="3" height="111" fill="#080808"/><rect x="30" y="566" width="4" height="111" fill="#0c2a10" stroke="#0a0a0a"/><rect x="31" y="675" width="2" height="1" fill="#4ad050"/>';
fp += '<rect x="11" y="604" width="14" height="23" rx="1" fill="#8e8d88" stroke="#111"/><path d="M12 606.500H24M12 610.500H24" stroke="#c9c8c2" stroke-width="3"/><path d="M12 615.500H24" stroke="#222"/>';
fp += '<rect x="42" y="585" width="2" height="69" fill="#080808"/><rect x="40" y="583" width="6" height="8" fill="#d0cfca" stroke="#111"/><path d="M40 587.500h6" stroke="#222"/>';
for (let y = 588; y < 645; y += 4) fp += `<rect x="51" y="${y}" width="5" height="3" fill="#36141a"/>`;
fp += '<rect x="27.500" y="679.500" width="27" height="9" rx="4" fill="#444" stroke="#111"/><text x="41" y="686" style="fill:#ddd;font-size:6px">Leveler</text>';
byId('fader-panel').innerHTML = fp;
```
